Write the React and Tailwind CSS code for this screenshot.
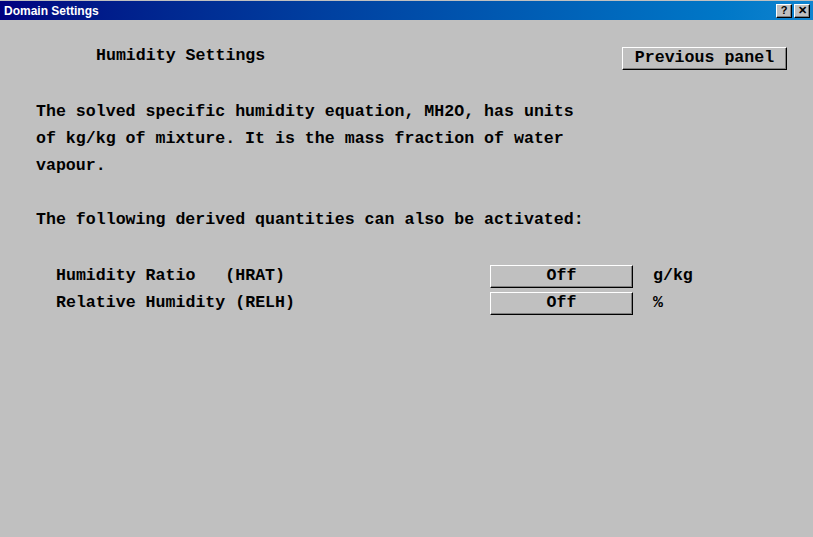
import React from 'react';

const mono = "font-['Liberation_Mono','Courier_New',monospace] font-bold text-[16.6px] text-black";

const RaisedButton = ({ children, className }) => (
    <button
        className={`shrink-0 bg-[#c0c0c0] border border-t-white border-l-white border-r-black border-b-black shadow-[inset_-1px_-1px_0_#808080] flex items-center justify-center leading-none ${mono} ${className}`}
    >
        {children}
    </button>
);

const TitleButton = ({ children }) => (
    <div className="w-[16px] h-[14px] bg-[#c0c0c0] border border-t-white border-l-white border-r-black border-b-black shadow-[inset_-1px_-1px_0_#808080] flex items-center justify-center text-[11px] font-bold leading-none font-['Liberation_Sans',Arial,sans-serif] text-black">
        {children}
    </div>
);

const ToggleRow = ({ label, unit }) => (
    <div className="flex items-center h-[27px]">
        <span className={`w-[490px] shrink-0 pl-[56px] whitespace-pre ${mono}`}>{label}</span>
        <RaisedButton className="w-[143px] h-[23px]">Off</RaisedButton>
        <span className={`ml-[20px] ${mono}`}>{unit}</span>
    </div>
);

const App = () => {
    return (
        <div className="w-[813px] h-[537px] bg-[#c0c0c0] flex flex-col overflow-hidden">
            <div className="mt-px h-[19px] bg-gradient-to-r from-[#000080] to-[#1084d0] flex items-center pl-[4px] pr-[3px]">
                <span className="text-white font-bold text-[12px] font-['Liberation_Sans',Arial,sans-serif]">
                    Domain Settings
                </span>
                <div className="ml-auto flex gap-[2px]">
                    <TitleButton>?</TitleButton>
                    <TitleButton>✕</TitleButton>
                </div>
            </div>

            <div className="flex items-start mt-[27px] h-[22px]">
                <span className={`pl-[96px] leading-[18px] ${mono}`}>Humidity Settings</span>
                <RaisedButton className="ml-auto mr-[26px] w-[165px] h-[23px]">Previous panel</RaisedButton>
            </div>

            <div className={`mt-[29px] pl-[36px] leading-[27px] whitespace-pre ${mono}`}>
                <div>The solved specific humidity equation, MH2O, has units</div>
                <div>of kg/kg of mixture. It is the mass fraction of water</div>
                <div>vapour.</div>
                <div>&nbsp;</div>
                <div>The following derived quantities can also be activated:</div>
            </div>

            <div className="mt-[30px] flex flex-col">
                <ToggleRow label="Humidity Ratio   (HRAT)" unit="g/kg" />
                <ToggleRow label="Relative Humidity (RELH)" unit="%" />
            </div>
        </div>
    );
};

export default App;
